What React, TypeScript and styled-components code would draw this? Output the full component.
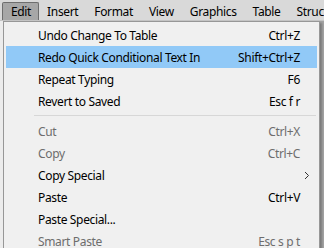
import React from "react";
import styled, { createGlobalStyle } from "styled-components";

const GlobalStyle = createGlobalStyle`
  html, body {
    margin: 0;
    padding: 0;
    background: #e3e3e3;
  }
  body {
    font-family: "Noto Sans", "Open Sans", sans-serif;
    font-size: 12px;
    letter-spacing: -0.35px;
  }
`;

const Window = styled.div`
  position: relative;
  width: 324px;
  height: 248px;
  overflow: hidden;
  background: #e8e8e8;
`;

const MenuBar = styled.div`
  display: flex;
  align-items: stretch;
  height: 21px;
  padding: 2px 0 0 2px;
  box-sizing: border-box;
  background: #d9d9d9;
  border-bottom: 1px solid #c4c4c4;
`;

const BarItem = styled.div<{ $open?: boolean }>`
  display: flex;
  align-items: center;
  padding: 0 7px 0 8px;
  margin-right: -1px;
  color: #000;
  white-space: nowrap;
  border: 1px solid ${(p) => (p.$open ? "#6e6e6e" : "transparent")};
  border-bottom: none;
  background: ${(p) => (p.$open ? "#a7a7a7" : "transparent")};
  border-radius: 2px 2px 0 0;
`;

const Backdrop = styled.div`
  height: 227px;
  display: flex;
  justify-content: space-between;
`;

const LeftStrip = styled.div`
  width: 4px;
  background: #ececec;
`;

const RightStrip = styled.div`
  width: 8px;
  background: #a3a3a3;
`;

const Dropdown = styled.div`
  position: absolute;
  top: 21px;
  left: 3px;
  width: 317px;
  padding: 2px 2px;
  box-sizing: border-box;
  background: #f0f0f0;
  border: 1px solid #979797;
  box-shadow: 2px 2px 2px rgba(0, 0, 0, 0.25);
`;

const Item = styled.div<{ $active?: boolean; $disabled?: boolean }>`
  display: flex;
  align-items: center;
  height: 22px;
  padding: 0 17px 0 32px;
  background: ${(p) => (p.$active ? "#91c9f7" : "transparent")};
  color: ${(p) => (p.$disabled ? "#6d6d6d" : "#000")};
  white-space: nowrap;
`;

const Label = styled.span`
  flex: 1;
`;

const Shortcut = styled.span`
  text-align: right;
`;

const Arrow = styled.span`
  display: flex;
  margin-right: -10px;
`;

const Separator = styled.div`
  height: 1px;
  margin: 3px 1px 4px 28px;
  background: #d7d7d7;
`;

type Entry =
  | { sep: true }
  | {
      sep?: false;
      label: string;
      shortcut?: string;
      active?: boolean;
      disabled?: boolean;
      submenu?: boolean;
    };

const entries: Entry[] = [
  { label: "Undo Change To Table", shortcut: "Ctrl+Z" },
  { label: "Redo Quick Conditional Text In", shortcut: "Shift+Ctrl+Z", active: true },
  { label: "Repeat Typing", shortcut: "F6" },
  { label: "Revert to Saved", shortcut: "Esc f r" },
  { sep: true },
  { label: "Cut", shortcut: "Ctrl+X", disabled: true },
  { label: "Copy", shortcut: "Ctrl+C", disabled: true },
  { label: "Copy Special", submenu: true },
  { label: "Paste", shortcut: "Ctrl+V" },
  { label: "Paste Special..." },
  { label: "Smart Paste", shortcut: "Esc s p t", disabled: true },
];

const barItems = ["Edit", "Insert", "Format", "View", "Graphics", "Table", "Structure"];

export default function App() {
  return (
    <Window>
      <GlobalStyle />
      <MenuBar>
        {barItems.map((b, i) => (
          <BarItem key={b} $open={i === 0}>
            {b}
          </BarItem>
        ))}
      </MenuBar>
      <Backdrop>
        <LeftStrip />
        <RightStrip />
      </Backdrop>
      <Dropdown>
        {entries.map((e, i) =>
          e.sep ? (
            <Separator key={i} />
          ) : (
            <Item key={i} $active={e.active} $disabled={e.disabled}>
              <Label>{e.label}</Label>
              {e.shortcut && <Shortcut>{e.shortcut}</Shortcut>}
              {e.submenu && (
                <Arrow>
                  <svg width="6" height="9" viewBox="0 0 6 9">
                    <path d="M1 1 L4.5 4.5 L1 8" fill="none" stroke="#333" strokeWidth="1" />
                  </svg>
                </Arrow>
              )}
            </Item>
          )
        )}
      </Dropdown>
    </Window>
  );
}
